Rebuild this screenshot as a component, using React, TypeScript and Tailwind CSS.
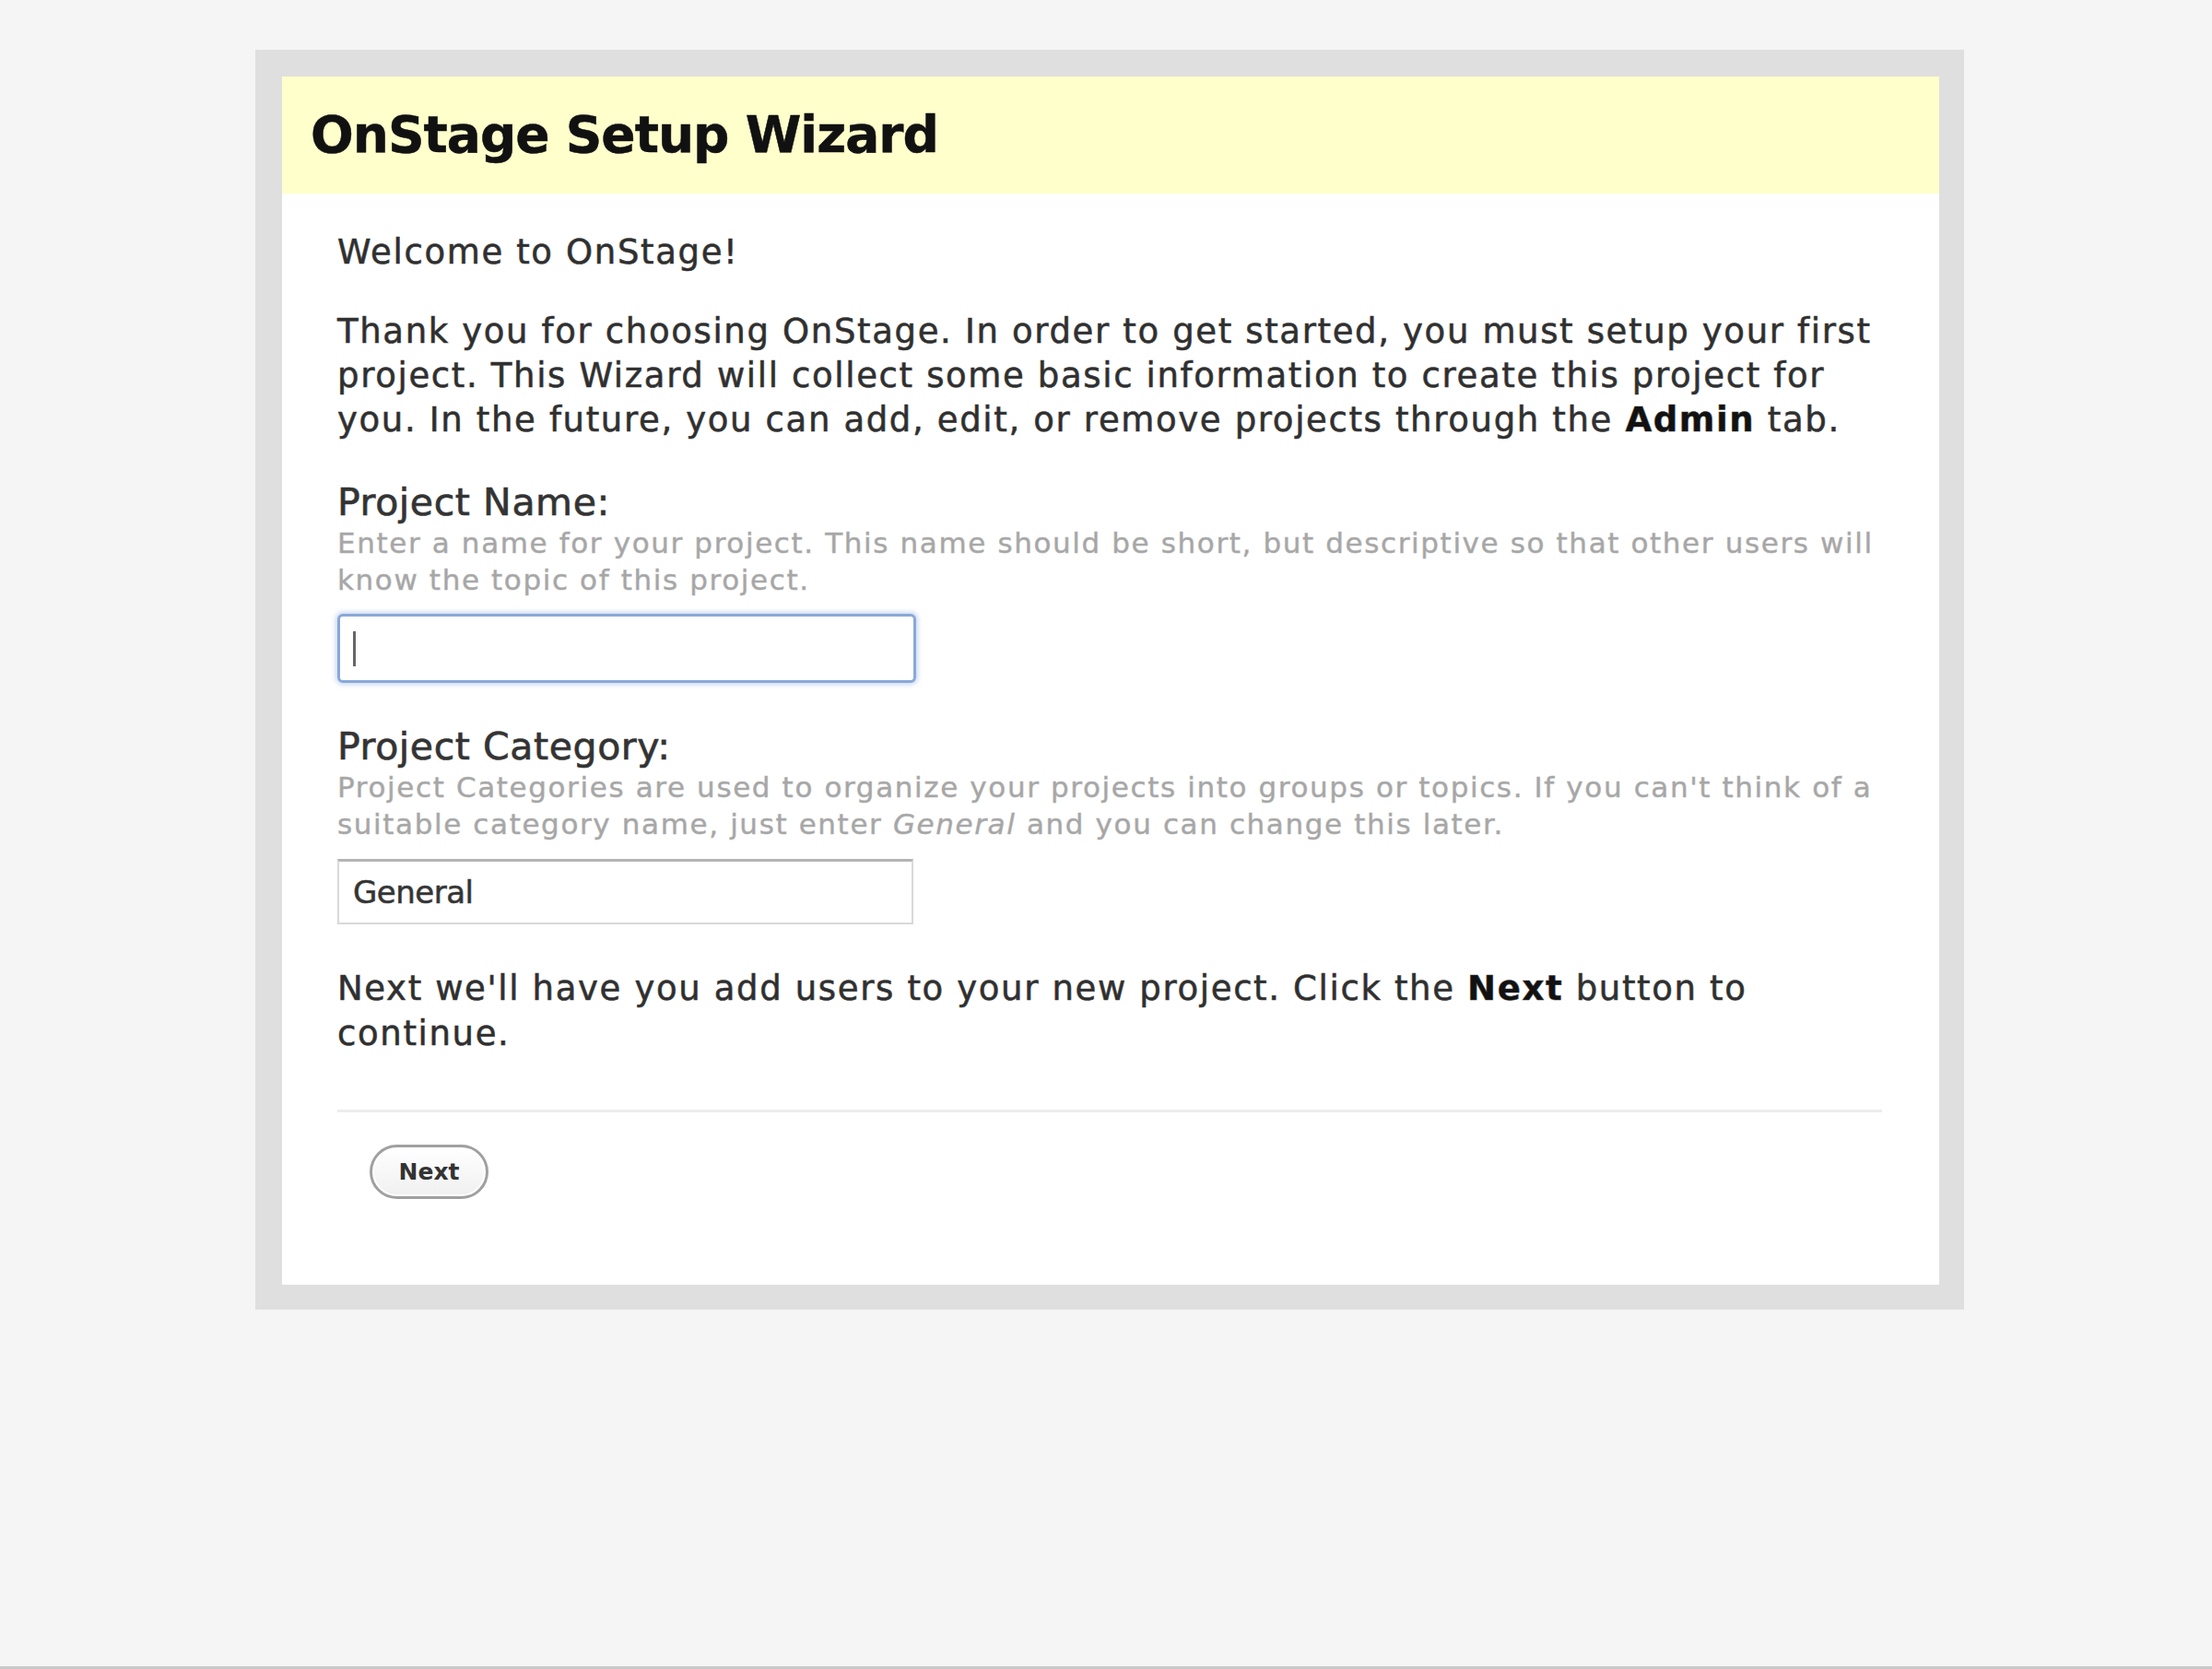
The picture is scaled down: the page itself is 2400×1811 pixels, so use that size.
import React from "react";

export default function App() {
  const body =
    "font-['DejaVu_Sans',sans-serif] text-[37px] tracking-[1.65px] leading-[48px] text-[#2f2f2f] [-webkit-text-stroke:0.6px_#3a3a3a]";
  const label =
    "font-['DejaVu_Sans',sans-serif] text-[41px] tracking-[0.6px] leading-[48px] text-[#333] [-webkit-text-stroke:0.7px_#3a3a3a]";
  const hint =
    "font-['DejaVu_Sans',sans-serif] text-[31px] tracking-[1.62px] leading-[40px] text-[#a6a6a6] [-webkit-text-stroke:0.5px_#b0b0b0]";
  return (
    <div className="h-[1811px] bg-[#f5f5f5] flex flex-col font-['DejaVu_Sans',sans-serif]">
      <div className="flex-1 pt-[54px] pl-[277px]">
        <div className="w-[1854px] bg-[#dfdfdf] pt-[29px] pl-[29px] pr-[27px] pb-[27px]">
          <div className="bg-white">
            <div className="h-[127px] bg-[#ffffcc] flex items-center pl-[31px]">
              <h1 className="font-['DejaVu_Sans',sans-serif] font-bold text-[55px] tracking-[-1px] text-[#111] leading-none [-webkit-text-stroke:0.5px_#111]">
                OnStage Setup Wizard
              </h1>
            </div>
            <div className="pl-[60px] pr-[62px] pt-[40px] pb-[93px]">
              <p className={body}>Welcome to OnStage!</p>
              <p className={`${body} mt-[38px] whitespace-nowrap`}>
                Thank you for choosing OnStage. In order to get started, you must setup your first
                <br />
                project. This Wizard will collect some basic information to create this project for
                <br />
                you. In the future, you can add, edit, or remove projects through the{" "}
                <b className="font-bold text-[#111]">Admin</b> tab.
              </p>

              <div className={`${label} mt-[41px]`}>Project Name:</div>
              <div className={`${hint} whitespace-nowrap`}>
                Enter a name for your project. This name should be short, but descriptive so that other users will
                <br />
                know the topic of this project.
              </div>
              <div className="mt-[17px] w-[628px] h-[75px] rounded-[6px] border-[3px] border-[#8aa8d8] shadow-[0_0_5px_2px_rgba(150,180,230,0.5)] bg-white flex items-center pl-[14px]">
                <span className="w-[3px] h-[38px] bg-[#666]" />
              </div>

              <div className={`${label} mt-[45px]`}>Project Category:</div>
              <div className={`${hint} whitespace-nowrap`}>
                Project Categories are used to organize your projects into groups or topics. If you can't think of a
                <br />
                suitable category name, just enter <i>General</i> and you can change this later.
              </div>
              <div className="mt-[18px] w-[625px] h-[71px] border-2 border-[#d9d9d9] border-t-[#b4b4b4] border-t-[3px] bg-white flex items-center pl-[15px]">
                <span className="font-['DejaVu_Sans',sans-serif] text-[34px] text-[#333] tracking-[-0.5px] [-webkit-text-stroke:0.6px_#444]">
                  General
                </span>
              </div>

              <p className={`${body} mt-[45px] leading-[49px]`}>
                Next we'll have you add users to your new project. Click the{" "}
                <b className="font-bold text-[#111]">Next</b> button to
                <br />
                continue.
              </p>

              <div className="mt-[58px] h-[3px] bg-[#ececec]" />

              <div className="mt-[35px] pl-[35px]">
                <button className="w-[129px] h-[59px] rounded-full border-[3px] border-[#a0a0a0] bg-gradient-to-b from-white to-[#f0f0f0] shadow-[inset_0_0_0_2px_#ffffff] font-['DejaVu_Sans',sans-serif] font-bold text-[25px] text-[#333] flex items-center justify-center">
                  Next
                </button>
              </div>
            </div>
          </div>
        </div>
      </div>
      <div className="h-[3px] bg-[#c9c9c9]" />
    </div>
  );
}
